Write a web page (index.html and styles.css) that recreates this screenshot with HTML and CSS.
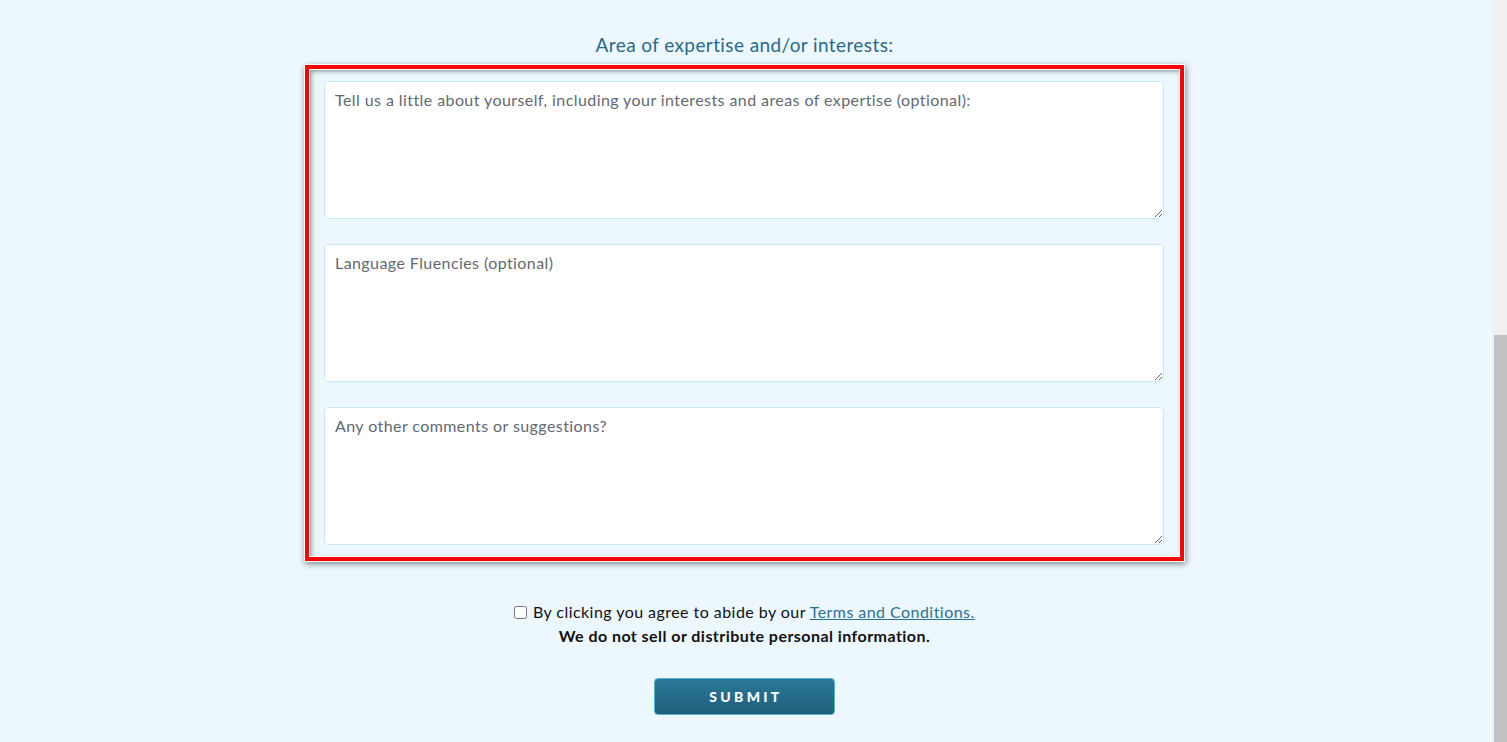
FILE: index.html
```html
<!DOCTYPE html>
<html lang="en">
<head>
<meta charset="utf-8">
<title>Area of expertise</title>
<link rel="stylesheet" href="styles.css">
</head>
<body>
<div class="page">
  <main class="main">
    <h2 class="section-title">Area of expertise and/or interests:</h2>
    <div class="frame">
      <textarea class="field" placeholder="Tell us a little about yourself, including your interests and areas of expertise (optional):"></textarea>
      <textarea class="field" placeholder="Language Fluencies (optional)"></textarea>
      <textarea class="field" placeholder="Any other comments or suggestions?"></textarea>
    </div>
    <div class="agree">
      <label class="agree-line"><input type="checkbox" class="check"> By clicking you agree to abide by our <a href="#" class="terms">Terms and Conditions.</a></label>
      <p class="privacy">We do not sell or distribute personal information.</p>
    </div>
    <div class="actions">
      <button class="submit" type="button">SUBMIT</button>
    </div>
  </main>
  <div class="scrollbar"><div class="thumb"></div></div>
</div>
</body>
</html>
```
FILE: styles.css
```css
html, body {
  margin: 0;
  padding: 0;
  height: 100%;
  overflow: hidden;
}
body {
  background: #ecf8fd;
  font-family: Lato, "Open Sans", sans-serif;
  color: #111;
}
.page {
  display: flex;
  height: 742px;
}
.main {
  flex: 1;
  padding: 33px 3px 0 0;
  display: flex;
  flex-direction: column;
  align-items: center;
}
.section-title {
  margin: 0 0 8px;
  font-size: 19px;
  line-height: 24px;
  font-weight: 400;
  letter-spacing: 0.4px;
  color: #29698b;
}
.frame {
  box-sizing: border-box;
  width: 879px;
  border: 4px solid #ff0000;
  padding: 12px 16px 12px 15px;
  display: flex;
  flex-direction: column;
  gap: 25px;
  box-shadow: 0 0 0 1px #ffffff, 1px 2px 6px 1px rgba(0, 0, 0, 0.45), inset 0 0 0 1px #ffffff, inset 2px 2px 5px rgba(0, 0, 0, 0.45);
}
.field {
  display: block;
  box-sizing: border-box;
  width: 840px;
  height: 138px;
  margin: 0;
  padding: 8px 10px;
  border: 1px solid #c8e8f6;
  border-radius: 4px;
  background: #fff;
  font-family: Lato, "Open Sans", sans-serif;
  font-size: 16px;
  letter-spacing: 0.42px;
  line-height: 20px;
  color: #333;
  resize: vertical;
  outline: none;
}
.field::placeholder {
  color: #636970;
  opacity: 1;
}
.agree {
  margin-top: 39px;
  text-align: center;
  font-size: 16px;
  line-height: 24px;
  letter-spacing: 0.45px;
}
.agree-line {
  display: block;
}
.check {
  width: 13px;
  height: 13px;
  margin: 0 1px 0 0;
  vertical-align: -1px;
}
.terms {
  color: #2b7196;
  text-decoration: underline;
}
.privacy {
  margin: 0;
  font-weight: 700;
}
.actions {
  margin-top: 30px;
}
.submit {
  box-sizing: border-box;
  width: 181px;
  height: 37px;
  border: 1px solid #5aaed0;
  border-radius: 4px;
  background: linear-gradient(#2a7999, #1f5e7a);
  color: #fff;
  font-family: Lato, "Open Sans", sans-serif;
  font-weight: 900;
  font-size: 14px;
  letter-spacing: 3.3px;
  padding: 0 0 0 3px;
  cursor: pointer;
}
.scrollbar {
  width: 15px;
  background: #f1f1f1;
  display: flex;
  flex-direction: column;
  align-items: flex-end;
}
.thumb {
  margin-top: 335px;
  width: 13px;
  flex: 1;
  background: #c1c1c1;
}
```
